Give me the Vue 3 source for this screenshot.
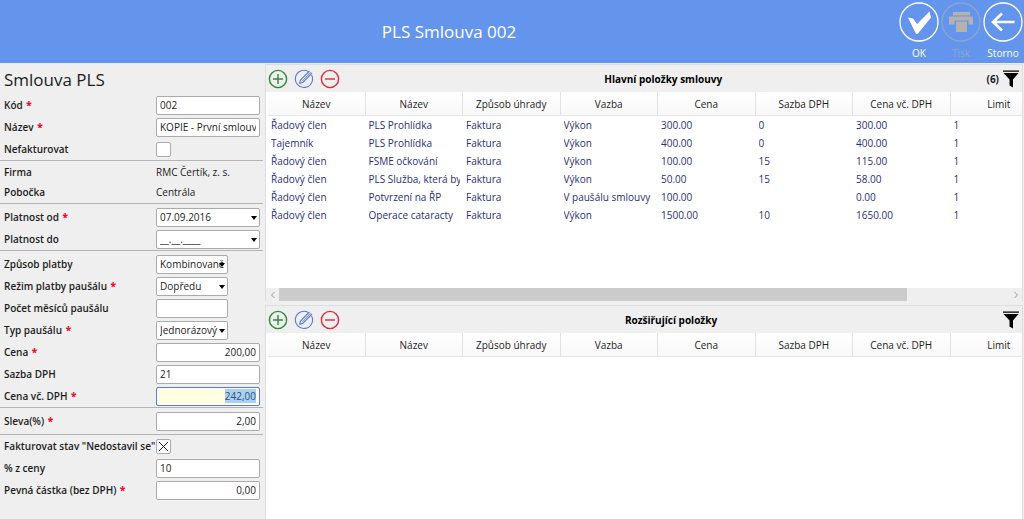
<script setup>
import { ref, onMounted } from 'vue'

const groups = [
  {
    id: 'basic',
    rows: [
      { id: 'kod', label: 'Kód', required: true, type: 'text', value: '002' },
      { id: 'nazev', label: 'Název', required: true, type: 'text', value: 'KOPIE - První smlouva' },
      { id: 'nefakturovat', label: 'Nefakturovat', type: 'check', value: false },
    ],
  },
  {
    id: 'company',
    rows: [
      { id: 'firma', label: 'Firma', type: 'static', value: 'RMC Čertík, z. s.' },
      { id: 'pobocka', label: 'Pobočka', type: 'static', value: 'Centrála' },
    ],
  },
  {
    id: 'validity',
    rows: [
      { id: 'od', label: 'Platnost od', required: true, type: 'date', value: '07.09.2016' },
      { id: 'do', label: 'Platnost do', type: 'date', value: '__.__.____' },
    ],
  },
  {
    id: 'payment',
    rows: [
      { id: 'zpusob', label: 'Způsob platby', type: 'select', value: 'Kombinovaně' },
      { id: 'rezim', label: 'Režim platby paušálu', required: true, type: 'select', value: 'Dopředu' },
      { id: 'mesice', label: 'Počet měsíců paušálu', type: 'text', narrow: true, value: '' },
      { id: 'typ', label: 'Typ paušálu', required: true, type: 'select', value: 'Jednorázový' },
      { id: 'cena', label: 'Cena', required: true, type: 'text', number: true, value: '200,00' },
      { id: 'sazba', label: 'Sazba DPH', type: 'text', value: '21' },
      { id: 'cenadph', label: 'Cena vč. DPH', required: true, type: 'text', number: true, active: true, value: '242,00' },
    ],
  },
  {
    id: 'discount',
    rows: [{ id: 'sleva', label: 'Sleva(%)', required: true, type: 'text', number: true, value: '2,00' }],
  },
  {
    id: 'noshow',
    rows: [
      { id: 'nedostavil', label: 'Fakturovat stav "Nedostavil se"', type: 'check', value: true },
      { id: 'procento', label: '% z ceny', type: 'text', value: '10' },
      { id: 'castka', label: 'Pevná částka (bez DPH)', required: true, type: 'text', number: true, value: '0,00' },
    ],
  },
]

const columns = ['Název', 'Název', 'Způsob úhrady', 'Vazba', 'Cena', 'Sazba DPH', 'Cena vč. DPH', 'Limit']

const panels = [
  {
    title: 'Hlavní položky smlouvy',
    count: '(6)',
    scroll: { size: 86 },
    rows: [
      ['Řadový člen', 'PLS Prohlídka', 'Faktura', 'Výkon', '300.00', '0', '300.00', '1'],
      ['Tajemník', 'PLS Prohlídka', 'Faktura', 'Výkon', '400.00', '0', '400.00', '1'],
      ['Řadový člen', 'FSME očkování', 'Faktura', 'Výkon', '100.00', '15', '115.00', '1'],
      ['Řadový člen', 'PLS Služba, která by', 'Faktura', 'Výkon', '50.00', '15', '58.00', '1'],
      ['Řadový člen', 'Potvrzení na ŘP', 'Faktura', 'V paušálu smlouvy', '100.00', '', '0.00', '1'],
      ['Řadový člen', 'Operace cataracty', 'Faktura', 'Výkon', '1500.00', '10', '1650.00', '1'],
    ],
  },
  { title: 'Rozšiřující položky', count: '', scroll: null, rows: [] },
]

const form = ref(null)
onMounted(() => {
  const field = form.value.querySelector('.active')
  field.focus()
  field.select()
})
</script>

<template>
  <div class="page">
    <header class="top">
      <h1>PLS Smlouva 002</h1>
      <nav class="actions">
        <button type="button">
          <svg viewBox="0 0 40 40" width="40" height="40">
            <circle cx="20" cy="20" r="19" fill="none" stroke="#fff" stroke-width="1.3" />
            <path d="M9 15.500L14 16.500L18 22L30.500 9.500L32 15.500L19 31.500Q17.500 32.500 16.500 31Z" fill="#fff" />
          </svg>
          OK
        </button>
        <button type="button" disabled>
          <svg viewBox="0 0 40 40" width="40" height="40">
            <circle cx="20" cy="20" r="19" fill="none" stroke="#8fa3cf" stroke-width="1.3" />
            <path d="M12 10H29V13.500H12ZM9 14.500Q8 14.500 8 15.500V22.500H13.500V18.500H27.500V22.500H32V15.500Q32 14.500 31 14.500ZM15 19.500H26V30H15Z" fill="#b5b1ae" />
          </svg>
          Tisk
        </button>
        <button type="button">
          <svg viewBox="0 0 40 40" width="40" height="40">
            <circle cx="20" cy="20" r="19" fill="none" stroke="#fff" stroke-width="1.3" />
            <path d="M31.500 20H10M19 11.500L10 20L19 28.500" fill="none" stroke="#fff" stroke-width="2.600" />
          </svg>
          Storno
        </button>
      </nav>
    </header>

    <main class="content">
      <form ref="form" class="side" @submit.prevent>
        <h2>Smlouva PLS</h2>
        <div v-for="g in groups" :key="g.id" class="group" :class="g.id">
          <div v-for="r in g.rows" :key="r.id" class="row">
            <span v-if="r.type === 'static'" class="label">{{ r.label }}</span>
            <label v-else class="label" :for="r.id">{{ r.label }} <b v-if="r.required">*</b></label>

            <span v-if="r.type === 'static'" class="static">{{ r.value }}</span>
            <input v-else-if="r.type === 'check'" :id="r.id" type="checkbox" :checked="r.value" />
            <span v-else-if="r.type === 'select'" class="drop narrow">
              <select :id="r.id"><option>{{ r.value }}</option></select>
            </span>
            <span v-else-if="r.type === 'date'" class="drop">
              <input :id="r.id" type="text" :value="r.value" />
            </span>
            <input
              v-else
              :id="r.id"
              type="text"
              :value="r.value"
              :class="{ narrow: r.narrow, number: r.number, active: r.active }"
            />
          </div>
        </div>
      </form>

      <div class="panels">
        <section v-for="p in panels" :key="p.title" class="panel">
          <div class="bar">
            <div class="tools">
              <button type="button" aria-label="Přidat">
                <svg viewBox="0 0 20 20" width="20" height="20" fill="none" stroke="#2e8b3a" stroke-width="1.400">
                  <circle cx="10" cy="10" r="8.600" />
                  <path d="M10 5V15M5 10H15" />
                </svg>
              </button>
              <button type="button" aria-label="Upravit">
                <svg viewBox="0 0 20 20" width="20" height="20" fill="none" stroke="#5b7bd0" stroke-width="1.100">
                  <path d="M14.500 2.600A8.600 8.600 0 1 0 17.600 6" />
                  <path d="M5.500 14.500L6.500 11L15.500 2M5.500 14.500L9 13.200L18 4" />
                  <path d="M8 12.300L16.800 3" stroke-width="0.800" />
                </svg>
              </button>
              <button type="button" aria-label="Odebrat">
                <svg viewBox="0 0 20 20" width="20" height="20" fill="none" stroke="#e02b3c" stroke-width="1.400">
                  <circle cx="10" cy="10" r="8.600" />
                  <path d="M5 10H15" />
                </svg>
              </button>
            </div>
            <h3>{{ p.title }}</h3>
            <div class="filter">
              <span v-if="p.count">{{ p.count }}</span>
              <button type="button" aria-label="Filtr">
                <svg viewBox="0 0 18 18" width="18" height="18">
                  <path d="M1 0.500H17V1.700H1ZM1.500 3H16.500L11 9.500V17.500L7.500 15.500V9.500Z" fill="#000" />
                </svg>
              </button>
            </div>
          </div>
          <div class="grid">
            <table>
              <thead>
                <tr><th v-for="(c, i) in columns" :key="i">{{ c }}</th></tr>
              </thead>
              <tbody>
                <tr v-for="(r, i) in p.rows" :key="i">
                  <td v-for="(c, j) in r" :key="j"><div class="cell">{{ c }}</div></td>
                </tr>
              </tbody>
            </table>
          </div>
          <div v-if="p.scroll" class="scroll">
            <button type="button" aria-label="Posunout vlevo">
              <svg viewBox="0 0 8 8" width="8" height="8"><path d="M5.500 1L2.500 4L5.500 7" fill="none" stroke="#999" /></svg>
            </button>
            <div class="track"><div class="thumb" :style="{ width: p.scroll.size + '%' }"></div></div>
            <button type="button" aria-label="Posunout vpravo">
              <svg viewBox="0 0 8 8" width="8" height="8"><path d="M2.500 1L5.500 4L2.500 7" fill="none" stroke="#999" /></svg>
            </button>
          </div>
        </section>
      </div>
    </main>
  </div>
</template>

<style>
body {
  background: #efefef;
}
</style>

<style scoped>
.page {
  display: flex;
  flex-direction: column;
  min-height: 100vh;
  background: #efefef;
  color: #1c1c1c;
  font: 10px/16px "Open Sans", "Noto Sans", sans-serif;
}
.page * {
  box-sizing: border-box;
}
h1,
h2,
h3 {
  margin: 0;
  font-weight: 400;
}
button {
  padding: 0;
  border: 0;
  background: none;
  color: inherit;
  font: inherit;
}
svg {
  display: block;
}

.top {
  display: flex;
  align-items: center;
  height: 63px;
  background: #6495ed;
  color: #fff;
}
h1 {
  flex: 1;
  font-size: 17px;
  line-height: 24px;
  text-align: center;
}
.actions {
  display: flex;
  align-self: flex-start;
  padding-top: 2px;
}
.actions button {
  display: flex;
  flex-direction: column;
  align-items: center;
  gap: 3px;
  width: 42px;
}
.actions button:disabled {
  color: #92a5cc;
}

.content {
  display: flex;
  flex: 1;
  border-top: 1px solid #e6edfa;
}

.side {
  flex: none;
  width: 265px;
  padding-right: 2px;
}
h2 {
  padding: 4px 0 0 4px;
  height: 30px;
  font-size: 17px;
  line-height: 24px;
}
.group {
  border-bottom: 1px solid #b4b4b4;
}
.group:last-child {
  border-bottom: 0;
}
.company {
  padding: 1px 0;
}
.validity {
  padding-top: 2px;
}
.payment {
  padding-top: 2px;
}
.discount {
  padding: 2px 0;
}
.row {
  display: flex;
  align-items: center;
  height: 22px;
}
.company .row {
  height: 20px;
}
.label {
  flex: none;
  width: 156px;
  padding-left: 4px;
  font-weight: 600;
  white-space: nowrap;
}
.label b {
  margin-left: 1px;
  color: #e8112d;
}
.row input,
.row select {
  margin: 0;
  padding: 0 3px;
  width: 104px;
  height: 19px;
  border: 1px solid #ababab;
  border-radius: 2px;
  outline: 0;
  background: #fff;
  color: #222;
  font: inherit;
}
.row input.narrow,
.narrow select {
  width: 72px;
}
.row select {
  appearance: none;
}
.row input[type="checkbox"] {
  appearance: none;
  display: grid;
  place-items: center;
  padding: 0;
  width: 15px;
  height: 15px;
}
.row input[type="checkbox"]:checked {
  background:
    linear-gradient(45deg, transparent 48%, #222 48%, #222 54%, transparent 54%) center / 9px 9px no-repeat,
    linear-gradient(-45deg, transparent 48%, #222 48%, #222 54%, transparent 54%) center / 9px 9px no-repeat,
    #fff;
}
.row .number {
  text-align: right;
}
.row .active {
  border-color: #5a7bd8;
  background: #ffffe1;
}
.active::selection {
  background: #a9d1f5;
  color: #33516e;
}
.drop {
  position: relative;
  display: flex;
}
.drop::after {
  content: "";
  position: absolute;
  top: 8px;
  right: 3px;
  border: 3px solid transparent;
  border-top: 4px solid #000;
  border-bottom: 0;
  pointer-events: none;
}

.panels {
  display: grid;
  flex: 1;
  grid-template-rows: 10fr 9fr;
  gap: 4px;
  min-width: 0;
  margin-right: 1px;
}
.panel {
  display: flex;
  flex-direction: column;
  min-width: 0;
  border: 1px solid #dedede;
  border-bottom: 0;
  background: #fff;
}
.bar {
  display: flex;
  align-items: center;
  height: 27px;
  padding: 0 2px;
  background: #efefef;
}
.tools {
  display: flex;
  gap: 6px;
}
h3 {
  flex: 1;
  font-size: 10px;
  line-height: 16px;
  font-weight: 700;
  text-align: center;
  color: #000;
}
.filter {
  display: flex;
  align-items: center;
  gap: 3px;
  font-weight: 700;
}
.grid {
  flex: 1;
  padding-left: 2px;
  overflow: hidden;
}
table {
  width: 780px;
  table-layout: fixed;
  border-spacing: 0;
}
th {
  height: 24px;
  padding: 0;
  border-right: 1px solid #e2e2e2;
  border-bottom: 1px solid #e6e6e6;
  background: linear-gradient(#fff, #f8f8f8);
  font-weight: 400;
}
td {
  height: 18px;
  padding: 0 3px;
  color: #1f2f78;
}
.cell {
  overflow: hidden;
  white-space: nowrap;
}
.scroll {
  display: flex;
  height: 13px;
  background: #efefef;
}
.scroll button {
  display: grid;
  place-items: center;
  width: 13px;
}
.track {
  flex: 1;
}
.thumb {
  height: 100%;
  background: #cbcbcb;
}
</style>
